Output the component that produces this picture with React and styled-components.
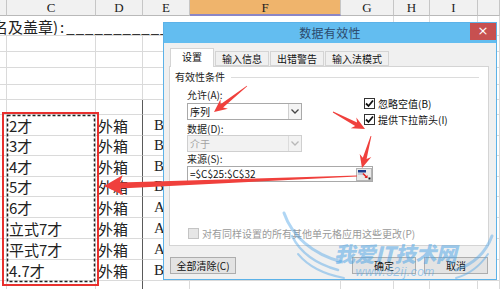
import React from "react";
import styled, { createGlobalStyle } from "styled-components";

const GlobalStyle = createGlobalStyle`
  html, body { margin: 0; padding: 0; background: #fff; }
  body { width: 500px; height: 289px; overflow: hidden; }
  * { box-sizing: border-box; }
`;

const COLS = [7, 89, 47, 47, 151, 53, 36, 48, 22];
const ROWS = [20, 16, 16, 17, 15, 15, 21, 20, 21, 20, 21, 21, 21, 21, 12];
const LETTERS = ["", "C", "D", "E", "F", "G", "H", "I", ""];

const sizes = ["2才", "3才", "4才", "5才", "6才", "立式7才", "平式7才", "4.7才"];
const grades = ["B", "B", "B", "B", "A", "A", "A", "B"];

const Stage = styled.div`
  position: relative;
  width: 500px;
  height: 289px;
  overflow: hidden;
  background: #fff;
`;

const Sheet = styled.div`
  display: grid;
  grid-template-columns: ${COLS.map((c) => c + "px").join(" ")};
  grid-template-rows: 16px ${ROWS.map((r) => r + "px").join(" ")};
`;

const HeadCell = styled.div`
  background: ${(p) => (p.$hi ? "#efb46c" : "#f1f1f1")};
  border-right: 1px solid #c6c6c6;
  border-bottom: ${(p) => (p.$hi ? "2px solid #8b86c6" : "1px solid #b9b9b9")};
  font-family: "Liberation Serif", serif;
  font-size: 13px;
  line-height: 15px;
  color: #222;
  text-align: center;
`;

const Cell = styled.div`
  border-right: 1px solid ${(p) => (p.$dark ? "#5a5a5a" : "#dadada")};
  border-bottom: 1px solid #dadada;
  font-family: ${(p) => (p.$serif ? '"Liberation Serif", serif' : '"Noto Sans CJK SC", sans-serif')};
  font-size: 15px;
  line-height: 1;
  color: #222;
  display: flex;
  align-items: center;
  padding-left: ${(p) => p.$pad || 2}px;
  white-space: nowrap;
  overflow: hidden;
`;

const SignCell = styled(Cell)`
  grid-column: span 5;
  border-right: none;
  font-size: 15px;
  padding-left: 0;
  align-items: flex-end;
  padding-bottom: 1px;
`;

const SignText = styled.span`
  margin-left: -7px;
`;

const Punct = styled.span`
  letter-spacing: 2px;
`;

const Dashes = styled.span`
  letter-spacing: 1px;
  color: #333;
`;

const Selection = styled.div`
  position: absolute;
  left: 2px;
  top: 112px;
  width: 97px;
  height: 174px;
  border: 2.5px solid #e8302e;
`;

const Overlay = styled.svg`
  position: absolute;
  left: 0;
  top: 0;
  pointer-events: none;
`;

/* ---------- dialog ---------- */

const Dialog = styled.div`
  position: absolute;
  left: 163px;
  top: 22px;
  width: 334px;
  height: 258px;
  border: 1px solid #5cb2e8;
  background: #f0f0f0;
  display: flex;
  flex-direction: column;
  font-family: "Noto Sans CJK SC", sans-serif;
  font-size: 10px;
  color: #1e1e1e;
`;

const TitleBar = styled.div`
  height: 20px;
  background: #63bdf0;
  display: grid;
  grid-template-columns: 26px 1fr 26px;
  align-items: start;
`;

const Title = styled.div`
  grid-column: 2;
  text-align: center;
  font-size: 12px;
  line-height: 20px;
  color: #2c4a6c;
  letter-spacing: 0.3px;
`;

const CloseBtn = styled.div`
  height: 17px;
  background: #c75050;
  color: #fff;
  font-family: "DejaVu Sans", sans-serif;
  font-size: 13px;
  line-height: 16px;
  text-align: center;
`;

const Body = styled.div`
  flex: 1;
  padding: 5px 7px 0 5px;
  display: flex;
  flex-direction: column;
`;

const Tabs = styled.div`
  height: 18px;
  display: flex;
  align-items: flex-end;
  padding-left: 1px;
`;

const Tab = styled.div`
  position: relative;
  z-index: 1;
  height: ${(p) => (p.$active ? 19 : 15)}px;
  min-width: ${(p) => (p.$active ? 44 : 0)}px;
  margin-bottom: ${(p) => (p.$active ? -1 : 0)}px;
  padding: 0 6px;
  background: ${(p) => (p.$active ? "#fff" : "#f0f0f0")};
  border: 1px solid #d4d4d4;
  border-bottom: ${(p) => (p.$active ? "none" : "1px solid #d4d4d4")};
  margin-left: ${(p) => (p.$active ? 0 : 1)}px;
  text-align: center;
  line-height: ${(p) => (p.$active ? 16 : 13)}px;
  color: #111;
`;

const Panel = styled.div`
  height: 180px;
  width: 320px;
  background: #fff;
  border: 1px solid #d4d4d4;
  padding: 4px 5px 6px 5px;
  display: flex;
  flex-direction: column;
`;

const GroupHead = styled.div`
  display: flex;
  align-items: center;
  height: 12px;
  line-height: 12px;
  color: #222;
`;

const GroupLine = styled.div`
  flex: 1;
  height: 1px;
  margin: 1px 4px 0 6px;
  background: #dcdcdc;
`;

const Settings = styled.div`
  display: flex;
  padding-left: 12px;
`;

const LeftCol = styled.div`
  width: 115px;
  display: flex;
  flex-direction: column;
`;

const RightCol = styled.div`
  margin-left: 62px;
  padding-top: 14px;
  display: flex;
  flex-direction: column;
  gap: 4px;
`;

const Label = styled.div`
  line-height: 12px;
  height: 12px;
  margin-top: ${(p) => p.$mt || 0}px;
  color: #222;
`;

const Select = styled.div`
  height: 17px;
  margin-top: ${(p) => p.$mt || 0}px;
  display: flex;
  border: 1px solid ${(p) => (p.$disabled ? "#cfcfcf" : "#a9a9a9")};
  background: ${(p) => (p.$disabled ? "#f2f2f2" : "#fff")};
  color: ${(p) => (p.$disabled ? "#a3a3a3" : "#111")};
`;

const SelectText = styled.div`
  flex: 1;
  padding-left: 2px;
  line-height: 15px;
`;

const SelectBtn = styled.div`
  width: 13px;
  display: flex;
  align-items: center;
  justify-content: center;
  border-left: 1px solid ${(p) => (p.$disabled ? "#dcdcdc" : "#d0d0d0")};
  background: ${(p) => (p.$disabled ? "#f2f2f2" : "#f4f4f4")};
`;

const CheckRow = styled.div`
  display: flex;
  align-items: center;
  height: 12px;
  gap: 3px;
  color: ${(p) => (p.$disabled ? "#9a9a9a" : "#111")};
`;

const Box = styled.div`
  width: 11px;
  height: 11px;
  border: 1px solid ${(p) => (p.$disabled ? "#c4c4c4" : "#333")};
  background: ${(p) => (p.$disabled ? "#e6e6e6" : "#fff")};
  display: flex;
  align-items: center;
  justify-content: center;
`;

const SourceWrap = styled.div`
  padding-left: 12px;
  display: flex;
  flex-direction: column;
`;

const SourceInput = styled.div`
  margin-top: 1px;
  width: 186px;
  height: 16px;
  border: 1px solid #a9a9a9;
  display: flex;
  align-items: center;
  padding-left: 2px;
  color: #111;
`;

const SourceText = styled.div`
  flex: 1;
  line-height: 14px;
`;

const PickBtn = styled.div`
  width: 16px;
  height: 13px;
  background: #e9e9e9;
  border: 1px solid #b5b5b5;
  display: flex;
  align-items: center;
  justify-content: center;
`;

const ApplyRow = styled(CheckRow)`
  margin-top: auto;
  padding-left: 13px;
`;

const Footer = styled.div`
  margin-top: 11px;
  display: flex;
  align-items: center;
  padding-left: 1px;
`;

const Button = styled.div`
  height: 17px;
  width: ${(p) => p.$w}px;
  margin-left: ${(p) => p.$ml || 0}px;
  border: 1px solid #adadad;
  background: #e3e3e3;
  text-align: center;
  line-height: 15px;
  color: #111;
`;

/* ---------- watermark ---------- */

const Watermark = styled.div`
  position: absolute;
  left: 334px;
  top: 240px;
  display: flex;
  flex-direction: column;
  align-items: center;
  pointer-events: none;
`;

const MarkTitle = styled.div`
  font-family: "Noto Sans CJK SC", sans-serif;
  font-weight: 900;
  font-style: italic;
  font-size: 21px;
  line-height: 26px;
  color: rgba(80, 165, 230, 0.55);
  letter-spacing: -0.5px;
`;

const MarkUrl = styled.div`
  font-family: "Liberation Sans", sans-serif;
  font-style: italic;
  font-size: 12px;
  line-height: 12px;
  color: rgba(80, 165, 230, 0.55);
  letter-spacing: 0.5px;
`;

const Chevron = ({ color = "#444" }) => (
  <svg width="8" height="5" viewBox="0 0 8 5">
    <path d="M0.5 0.5 L4 4 L7.5 0.5" fill="none" stroke={color} strokeWidth="1.3" />
  </svg>
);

const Tick = () => (
  <svg width="9" height="9" viewBox="0 0 9 9">
    <path d="M1 4.5 L3.5 7 L8 1.5" fill="none" stroke="#111" strokeWidth="1.8" />
  </svg>
);

const PickIcon = () => (
  <svg width="14" height="11" viewBox="0 0 14 11">
    <rect x="1" y="1" width="8" height="2.5" fill="#1c3a8c" />
    <rect x="1" y="4.5" width="5" height="1" fill="#9aa6c6" />
    <path d="M6 4.5 L10 8.5" stroke="#e02020" strokeWidth="1.6" />
    <path d="M10.5 9 L7.5 9 L10.5 6 Z" fill="#e02020" />
    <rect x="11.5" y="8.5" width="2" height="2" fill="#111" />
  </svg>
);

// tapered arrow polygon, tail thin, head at (x2, y2)
const arrowPoints = (x1, y1, x2, y2, neck, head, barb) => {
  const L = Math.hypot(x2 - x1, y2 - y1);
  const ux = (x2 - x1) / L;
  const uy = (y2 - y1) / L;
  const px = -uy;
  const py = ux;
  const nx = x2 - ux * head;
  const ny = y2 - uy * head;
  const bx = x2 - ux * (head + 3);
  const by = y2 - uy * (head + 3);
  const pts = [
    [x1 + px * 0.4, y1 + py * 0.4],
    [nx + (px * neck) / 2, ny + (py * neck) / 2],
    [bx + px * barb, by + py * barb],
    [x2, y2],
    [bx - px * barb, by - py * barb],
    [nx - (px * neck) / 2, ny - (py * neck) / 2],
    [x1 - px * 0.4, y1 - py * 0.4],
  ];
  return pts.map((p) => p[0].toFixed(1) + "," + p[1].toFixed(1)).join(" ");
};

const arrows = [
  [247, 86, 214, 112, 4, 10, 6],
  [333, 112, 365, 129, 4, 10, 6],
  [371, 136, 362, 168, 4, 10, 6],
  [357, 176, 104, 186, 6, 16, 10],
];

export default function App() {
  const cells = [];
  ROWS.forEach((h, r) => {
    COLS.forEach((w, c) => {
      const key = r + "-" + c;
      if (r === 0) {
        if (c === 0) {
          cells.push(
            <SignCell key={key}>
              <SignText>
                名及盖章<Punct>):</Punct>
                <Dashes>_____________</Dashes>
              </SignText>
            </SignCell>
          );
        } else if (c >= 5) {
          cells.push(<Cell key={key} />);
        }
        return;
      }
      const d = r - 6;
      const inData = d >= 0 && d < 8;
      let text = "";
      let serif = false;
      let pad = 2;
      if (inData && c === 1) text = sizes[d];
      if (inData && c === 2) text = "外箱";
      if (inData && c === 3) {
        text = grades[d];
        serif = true;
        pad = 11;
      }
      cells.push(
        <Cell key={key} $dark={c === 2 && r >= 5} $serif={serif} $pad={pad}>
          {text}
        </Cell>
      );
    });
  });

  return (
    <Stage>
      <GlobalStyle />
      <Sheet>
        {LETTERS.map((l, i) => (
          <HeadCell key={"h" + i} $hi={l === "F"}>
            {l}
          </HeadCell>
        ))}
        {cells}
      </Sheet>

      <Selection />
      <Overlay width="500" height="289">
        <rect x="7.5" y="115.5" width="87" height="166" fill="none" stroke="#222" strokeWidth="1.5" strokeDasharray="3 2" />
      </Overlay>

      <Dialog>
        <TitleBar>
          <Title>数据有效性</Title>
          <CloseBtn>×</CloseBtn>
        </TitleBar>
        <Body>
          <Tabs>
            <Tab $active>设置</Tab>
            <Tab>输入信息</Tab>
            <Tab>出错警告</Tab>
            <Tab>输入法模式</Tab>
          </Tabs>
          <Panel>
            <GroupHead>
              有效性条件
              <GroupLine />
            </GroupHead>
            <Settings>
              <LeftCol>
                <Label $mt={6}>允许(A):</Label>
                <Select $mt={2}>
                  <SelectText>序列</SelectText>
                  <SelectBtn>
                    <Chevron />
                  </SelectBtn>
                </Select>
                <Label $mt={3}>数据(D):</Label>
                <Select $disabled>
                  <SelectText>介于</SelectText>
                  <SelectBtn $disabled>
                    <Chevron color="#b8b8b8" />
                  </SelectBtn>
                </Select>
              </LeftCol>
              <RightCol>
                <CheckRow>
                  <Box>
                    <Tick />
                  </Box>
                  忽略空值(B)
                </CheckRow>
                <CheckRow>
                  <Box>
                    <Tick />
                  </Box>
                  提供下拉箭头(I)
                </CheckRow>
              </RightCol>
            </Settings>
            <SourceWrap>
              <Label $mt={1}>来源(S):</Label>
              <SourceInput>
                <SourceText>=$C$25:$C$32</SourceText>
                <PickBtn>
                  <PickIcon />
                </PickBtn>
              </SourceInput>
            </SourceWrap>
            <ApplyRow $disabled>
              <Box $disabled />
              对有同样设置的所有其他单元格应用这些更改(P)
            </ApplyRow>
          </Panel>
          <Footer>
            <Button $w={66}>全部清除(C)</Button>
            <Button $w={64} $ml={116}>
              确定
            </Button>
            <Button $w={64} $ml={8}>
              取消
            </Button>
          </Footer>
        </Body>
      </Dialog>

      <Overlay width="500" height="289">
        <g fill="none" stroke="rgba(80,165,230,0.45)" strokeLinecap="round">
          <path d="M284 213 C292 236 312 254 342 262" strokeWidth="3" />
          <path d="M292 236 C300 252 316 264 338 270" strokeWidth="2.5" />
          <path d="M298 254 C308 266 322 274 344 278" strokeWidth="2" />
          <path d="M492 236 C486 252 474 264 456 270" strokeWidth="3" />
          <path d="M488 254 C480 266 470 274 456 278" strokeWidth="2" />
        </g>
      </Overlay>
      <Watermark>
        <MarkTitle>我爱IT技术网</MarkTitle>
        <MarkUrl>www.52ij.com</MarkUrl>
      </Watermark>

      <Overlay width="500" height="289">
        {arrows.map((a, i) => (
          <polygon key={i} points={arrowPoints(...a)} fill="#f0403c" />
        ))}
      </Overlay>
    </Stage>
  );
}
